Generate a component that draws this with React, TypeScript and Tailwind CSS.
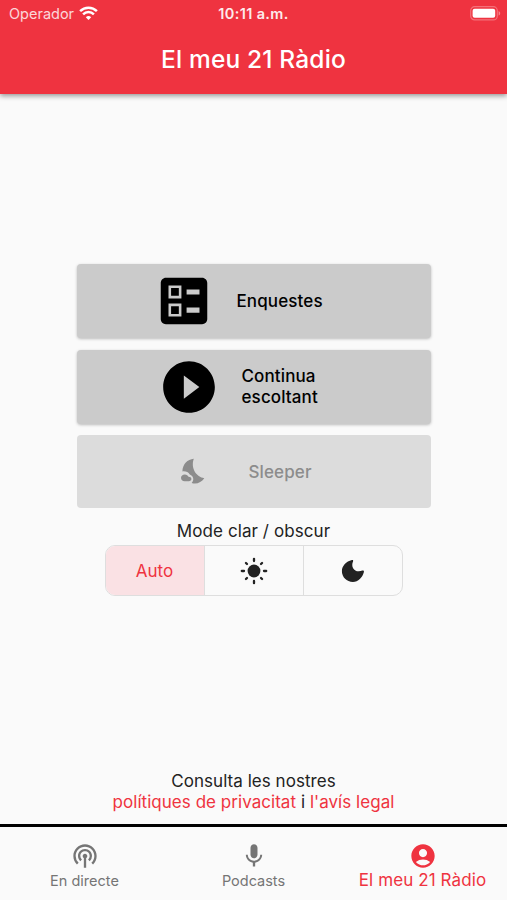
import { useState } from 'react';
import type { ReactNode } from 'react';
import clsx from 'clsx';
import { MdAccountCircle, MdBallot, MdMic, MdPlayCircleFilled, MdPodcasts } from 'react-icons/md';

const RAY_ANGLES = [0, 45, 90, 135, 180, 225, 270, 315];

function WifiIcon() {
  return (
    <svg width="19" height="15" viewBox="0 0 19 15" fill="none" stroke="currentColor" strokeWidth="2.5">
      <path d="M1.1 5.2a12 12 0 0 1 16.8 0" />
      <path d="M4.1 8.3a7.7 7.7 0 0 1 10.8 0" />
      <path d="M9.5 14l-2.7-2.8a3.9 3.9 0 0 1 5.4 0z" fill="currentColor" stroke="none" />
    </svg>
  );
}

function BatteryIcon() {
  return (
    <svg width="31" height="15" viewBox="0 0 31 15" fill="none">
      <rect x="0.7" y="0.7" width="26.6" height="13.2" rx="4" stroke="white" strokeOpacity="0.3" strokeWidth="1.2" />
      <rect x="2.6" y="2.8" width="22.6" height="9" rx="2" fill="white" />
      <path d="M28.6 5v4.6c1-.4 1.6-1.3 1.6-2.3S29.6 5.4 28.6 5z" fill="white" fillOpacity="0.4" />
    </svg>
  );
}

function SleeperIcon() {
  return (
    <svg width="28" height="28" viewBox="0 0 28 28" fill="currentColor">
      <path d="M14.8 .8C8.5 1.5 3.6 6.1 3.4 13.4C6.6 13 9.3 14.1 10.8 16.5C14.5 18.1 15.5 22 12.7 24.9C17.5 26.5 22.3 24.5 25.3 20.2C17.5 19.1 11.4 10.5 14.8 .8Z" />
      <path d="M5.6 23.2C3.5 23.2 2 21.8 2 19.8C2 17.8 3.7 16.4 5.8 16.4C7.7 16.4 9 17.4 9.5 18.8C11.2 18.8 12.4 19.7 12.4 21C12.4 22.4 11.3 23.2 9.9 23.2Z" />
    </svg>
  );
}

function SunIcon() {
  return (
    <svg width="28" height="28" viewBox="-14 -14 28 28">
      <circle r="6.4" fill="currentColor" />
      {RAY_ANGLES.map(angle => (
        <path
          key={angle}
          d={angle % 90 === 0 ? 'M0 -12.2V-10' : 'M0 -11.4V-9.9'}
          transform={`rotate(${angle})`}
          stroke="currentColor"
          strokeWidth="2.3"
          strokeLinecap="round"
        />
      ))}
    </svg>
  );
}

function MoonIcon() {
  return (
    <svg width="24" height="24" viewBox="0 0 24 24" fill="currentColor">
      <path d="M10.9 1.1C11.7 .8 12.4 1.4 12.1 2.2C9.2 8.8 14.3 14.4 21.4 11.6C22.4 11.2 23.2 11.9 22.9 12.9C21.5 18.4 17.2 22.9 11.9 22.9C5.7 22.9 .9 18.1 .9 12C.9 7 5.2 2.5 10.9 1.1Z" />
    </svg>
  );
}

interface MenuButtonProps {
  icon: ReactNode;
  children: ReactNode;
  className: string;
  disabled?: boolean;
}

function MenuButton({ icon, children, className, disabled }: MenuButtonProps) {
  return (
    <button
      type="button"
      disabled={disabled}
      className={clsx(
        'flex w-full items-center rounded-[4px] text-left text-[17px] font-medium leading-[21px] tracking-[0.12px]',
        disabled ? 'bg-[#dcdcdc] text-[#8c8c8c]' : 'bg-[#cbcbcb] text-black shadow-[0_1px_3px_rgba(0,0,0,0.25)]',
        className
      )}
    >
      {icon}
      {children}
    </button>
  );
}

const modes = [
  { id: 'auto', label: 'Auto', content: <span className="pt-0.5 text-[17px]">Auto</span> },
  { id: 'light', label: 'Clar', content: <SunIcon /> },
  { id: 'dark', label: 'Obscur', content: <MoonIcon /> }
];

const tabs = [
  { id: 'live', label: 'En directe', icon: <MdPodcasts size={28} /> },
  { id: 'podcasts', label: 'Podcasts', icon: <MdMic size={28} /> },
  { id: 'mine', label: 'El meu 21 Ràdio', icon: <MdAccountCircle size={28} /> }
];

export default function App() {
  const [mode, setMode] = useState('auto');
  const [tab, setTab] = useState('mine');

  return (
    <div className="flex h-[900px] w-full flex-col bg-[#fafafa] font-['Inter',sans-serif] text-[#222]">
      <header className="h-[94px] shrink-0 bg-[#ef3340] text-white shadow-[0_2px_5px_rgba(0,0,0,0.4)]">
        <div className="grid h-[27px] grid-cols-3 items-center pl-[9px] pr-[6px]">
          <div className="flex items-center gap-[5px] text-[14.5px] leading-none">
            <span className="pt-px opacity-80">Operador</span>
            <WifiIcon />
          </div>
          <div className="-ml-[3px] pt-px text-center text-[14.5px] font-semibold leading-none tracking-[0.35px] opacity-90">
            10:11 a.m.
          </div>
          <div className="flex justify-end">
            <BatteryIcon />
          </div>
        </div>
        <h1 className="pt-[16px] text-center text-[24.5px] font-medium leading-[32px] tracking-[0.17px]">
          El meu 21 Ràdio
        </h1>
      </header>

      <main className="flex flex-1 flex-col items-center pt-[170px]">
        <div className="flex w-[354px] flex-col">
          <MenuButton icon={<MdBallot size={62} />} className="h-[74px] gap-[22px] pl-[76px]">
            <span>Enquestes</span>
          </MenuButton>
          <MenuButton icon={<MdPlayCircleFilled size={62} />} className="mt-[12px] h-[74px] gap-[22px] pl-[81px]">
            <span>
              Continua
              <br />
              escoltant
            </span>
          </MenuButton>
          <MenuButton icon={<SleeperIcon />} className="mt-[11px] h-[73px] gap-[41px] pl-[102px]" disabled>
            <span className="pl-px pt-px">Sleeper</span>
          </MenuButton>
        </div>

        <p className="mt-[12px] text-[17px] leading-[22px] tracking-[0.08px]">Mode clar / obscur</p>
        <div className="mt-[3px] flex h-[51px] w-[298px] divide-x divide-[#dedede] overflow-hidden rounded-[10px] border border-[#dedede]">
          {modes.map(item => (
            <button
              key={item.id}
              type="button"
              aria-label={item.label}
              onClick={() => setMode(item.id)}
              className={clsx(
                'flex flex-1 items-center justify-center',
                mode === item.id && 'bg-[#fae1e4] text-[#ef3340]'
              )}
            >
              {item.content}
            </button>
          ))}
        </div>

        <p className="mt-auto pb-[11px] text-center text-[17px] leading-[21px] tracking-[0.04px]">
          Consulta les nostres
          <br />
          <a className="text-[#ef3340]">polítiques de privacitat</a> i <a className="text-[#ef3340]">l'avís legal</a>
        </p>
      </main>

      <nav className="grid h-[76px] shrink-0 grid-cols-3 border-t-[3px] border-black">
        {tabs.map(item => (
          <button
            key={item.id}
            type="button"
            onClick={() => setTab(item.id)}
            className={clsx(
              'flex flex-col items-center pt-[15px]',
              tab === item.id ? 'text-[17px] tracking-[0.1px] text-[#ef3340]' : 'text-[14.5px] text-[#757575]'
            )}
          >
            {item.icon}
            <span className={clsx('whitespace-nowrap', tab === item.id ? 'leading-[20px]' : 'leading-[22px]')}>
              {item.label}
            </span>
          </button>
        ))}
      </nav>
    </div>
  );
}
